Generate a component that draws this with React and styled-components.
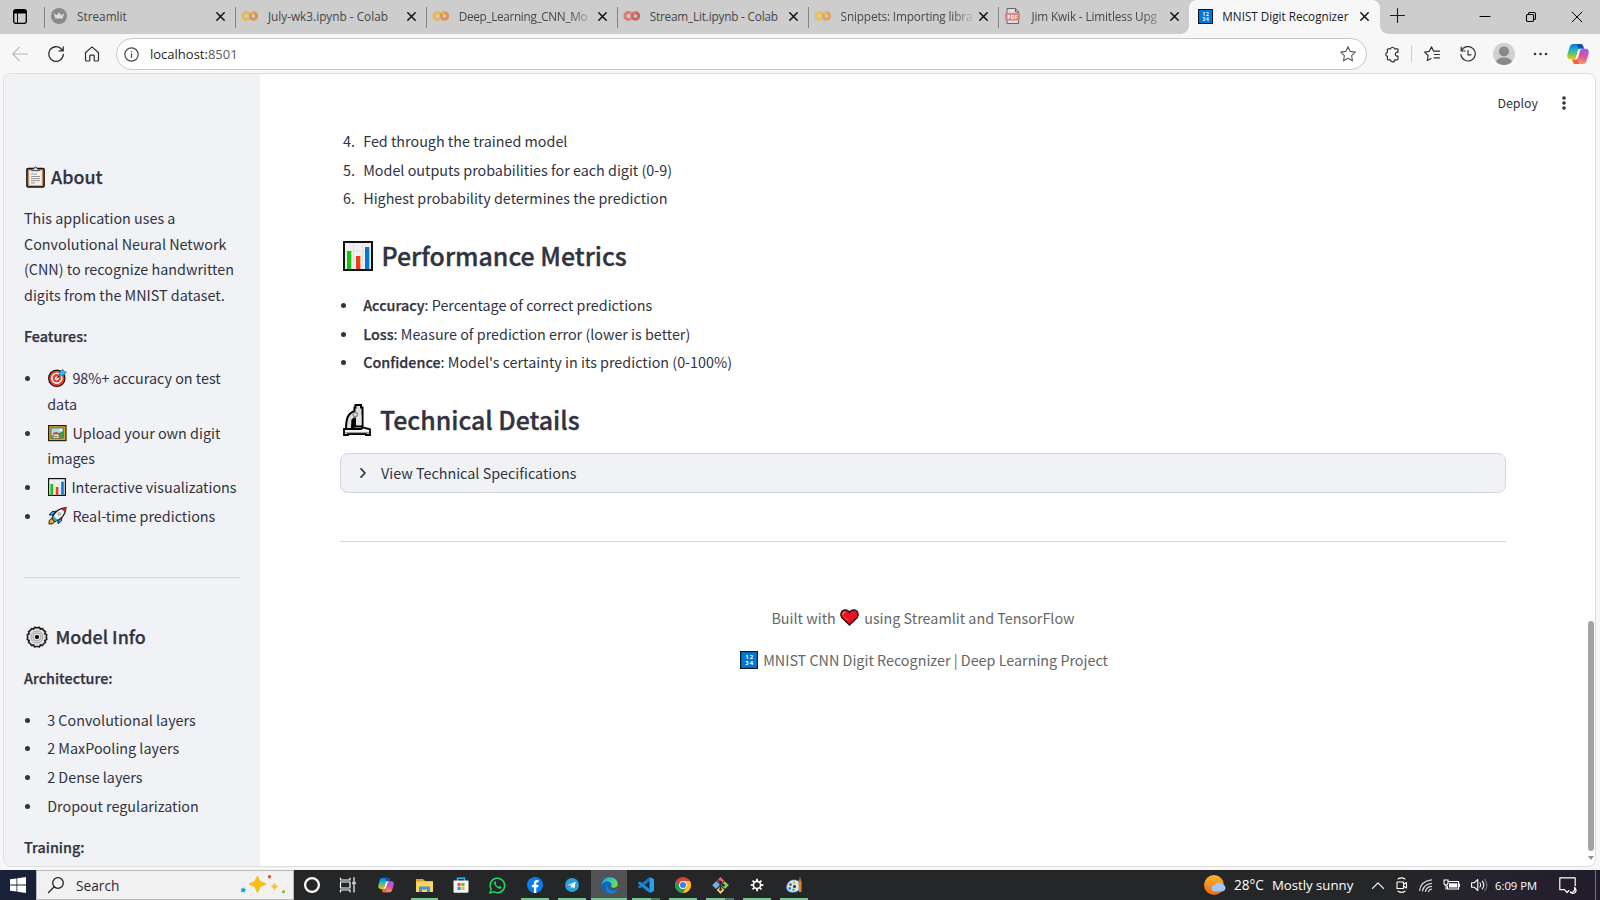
import React from "react";
import styled, { createGlobalStyle, css } from "styled-components";

const SEGOE = `"Open Sans", "Noto Sans", sans-serif`;
const SOURCE = `"Noto Sans CJK SC", "Noto Sans", sans-serif`;

const Global = createGlobalStyle`
  * { box-sizing: border-box; }
  body { margin: 0; background: #f7f7f7; overflow: hidden; }
  svg { display: block; flex: none; overflow: visible; }
`;

const Screen = styled.div`
  width: 1600px; height: 900px; display: flex; flex-direction: column;
  font-family: ${SEGOE}; background: #f7f7f7; overflow: hidden;
`;

/* ---------- browser chrome ---------- */
const TabBar = styled.div`
  height: 34px; flex: none; background: #cdcdcd; display: flex; align-items: stretch;
`;
const TabMenu = styled.div`
  width: 44px; flex: none; display: flex; align-items: center; padding: 0 0 2px 13px;
`;
const Tab = styled.div`
  width: 190.9px; flex: none; display: flex; align-items: center; padding: 0 10px 2px 0;
  color: #474747; font-size: 11.8px; line-height: 18px;
  &::before { content: ""; width: 1px; height: 21px; margin: 2px 6px 0 0; background: #858585; flex: none; }
`;
const ActiveTab = styled.div`
  width: 191px; flex: none; display: flex; align-items: center; position: relative;
  background: #f7f7f7; border-radius: 8px 8px 0 0; padding: 0 11px 2px 9px;
  color: #1b1b1b; font-size: 11.7px; line-height: 18px;
  &::before, &::after {
    content: ""; position: absolute; bottom: 0; width: 8px; height: 8px;
  }
  &::before { left: -8px; background: radial-gradient(circle at 0 0, transparent 7.5px, #f7f7f7 8px); }
  &::after { right: -8px; background: radial-gradient(circle at 100% 0, transparent 7.5px, #f7f7f7 8px); }
`;
const TabTitle = styled.span`
  flex: 1; min-width: 0; margin: 0 6px 0 10px; padding-bottom: 1px; white-space: nowrap;
  letter-spacing: ${(p) => p.$track || 0}px;
  ${(p) => p.$fade && css`mask-image: linear-gradient(90deg, #000 calc(100% - 22px), rgba(0, 0, 0, 0.15));`}
`;
const TabIcon = styled.span`width: ${(p) => p.$w || 16}px; flex: none; opacity: ${(p) => (p.$dim ? 0.6 : 1)};`;
const WindowButtons = styled.div`
  flex: 1; display: flex; align-items: center; justify-content: flex-end; gap: 36px; padding-right: 18px;
`;
const NewTab = styled.div`display: flex; align-items: center; padding: 0 0 3px 10px;`;

const Toolbar = styled.div`
  height: 39px; flex: none; display: flex; align-items: center; padding: 0 11px 0 12px; background: #f7f7f7;
`;
const NavButtons = styled.div`display: flex; align-items: center; gap: 20px; width: 104px; flex: none;`;
const AddressField = styled.div`
  width: 1251px; height: 32px; flex: none; border: 1px solid #c9c9c9; border-radius: 16px; background: #fff;
  display: flex; align-items: center; padding: 0 10px 0 7px; margin-top: 1px;
`;
const Url = styled.span`
  flex: 1; margin-left: 11px; font-size: 13px; line-height: 20px; color: #1f1f1f;
  span { color: #5a5a5a; }
`;
const ToolIcons = styled.div`
  display: grid; grid-template-columns: 27px 13px 36px 33px 39.5px 34.5px 22px; align-items: center; padding-left: 17px;
`;
const Divider = styled.span`width: 1px; height: 16px; background: #cfcfcf;`;

/* ---------- page ---------- */
const Viewport = styled.div`
  height: 794px; flex: none; margin: 0 4px 3px 3px; border: 1px solid #dedede; border-radius: 8px;
  display: flex; overflow: hidden; background: #fff; position: relative;
  font-family: ${SOURCE}; font-size: 14.35px; line-height: 25.6px; color: #31333f;
`;
const Sidebar = styled.aside`
  width: 256px; flex: none; background: #f0f2f6; padding: 90px 20px 0; white-space: nowrap; overflow: hidden;
`;
const Main = styled.main`
  flex: 1; padding: 54px 89px 0 80px; overflow: hidden; white-space: nowrap;
`;
const Heading = styled.h3`
  margin: 0 0 17px; display: flex; align-items: center; gap: ${(p) => p.$gap}px;
  padding-left: 2px; font-weight: 500; font-size: 17.9px; line-height: 24px; height: 24px;
  -webkit-text-stroke: 0.25px #31333f;
  svg { margin-top: 2px; }
`;
const Title = styled.h2`
  margin: ${(p) => p.$top}px 0 ${(p) => p.$bottom}px; display: flex; align-items: center; gap: ${(p) => p.$gap}px;
  padding-left: 3px; font-weight: 500; font-size: 24.9px; line-height: 34px; height: 34px;
  -webkit-text-stroke: 0.35px #31333f;
  svg { margin-top: 2px; }
`;
const Paragraph = styled.p`margin: 0 0 16px;`;
const Strong = styled.strong`font-weight: 500; -webkit-text-stroke: 0.25px #31333f;`;
const List = styled.ul`list-style: none; margin: ${(p) => p.$top || 0}px 0 0; padding: 0;`;
const Item = styled.li`
  display: grid; grid-template-columns: 23.2px 1fr; margin-bottom: 3.1px;
  &:last-child { margin-bottom: 0; }
`;
const Bullet = styled.span`
  width: 5px; height: 5px; border-radius: 50%; background: #31333f; margin: 11px 0 0 1.2px;
`;
const Number = styled.span`padding-left: 3px;`;
const Glyph = styled.span`
  display: inline-block; vertical-align: -3px; height: 18px; line-height: 0; margin: 0 ${(p) => p.$r ?? 2}px 0 ${(p) => p.$l ?? 1}px;
`;
const Rule = styled.hr`
  border: 0; height: 1px; background: #d2d4da; margin: ${(p) => p.$top}px 0 ${(p) => p.$bottom}px;
`;
const Expander = styled.div`
  height: 40px; border: 1px solid #d5d6db; border-radius: 8px; background: #f0f2f6;
  display: flex; align-items: center; padding: 0 0 1.5px 18px; gap: 14px;
`;
const Footer = styled.footer`text-align: center; color: #666;`;
const Credit = styled(Paragraph)`padding-left: ${(p) => p.$shift || 0}px;`;
const PageMenu = styled.div`
  position: absolute; top: 17px; right: 29px; display: flex; align-items: center; gap: 24px;
  font-size: 12.4px; line-height: 24px;
`;
const ScrollTrack = styled.div`
  position: absolute; top: 547px; right: 1px; width: 6px; height: 240px;
  display: flex; flex-direction: column; align-items: center; gap: 5px;
`;
const ScrollThumb = styled.div`width: 6px; height: 230px; border-radius: 3px; background: #a3a3a8;`;
const ScrollArrow = styled.span`border: 3px solid transparent; border-top: 4px solid #8f8f94; border-bottom: 0;`;

/* ---------- taskbar ---------- */
const Taskbar = styled.div`
  height: 30px; flex: none; display: flex; align-items: stretch; color: #fff;
  background: linear-gradient(90deg, #252628 0 1400px, #26222e 1500px, #211c2c);
`;
const StartButton = styled.div`
  width: 36px; flex: none; background: #182137; display: flex; align-items: center; justify-content: center;
`;
const SearchBox = styled.div`
  width: 258px; flex: none; background: #f1f1f1; border: 1px solid #b9b9b9; color: #2b2b2b;
  display: flex; align-items: center; padding: 0 7px 0 11px; font-size: 13.7px; line-height: 20px;
  span { flex: 1; margin-left: 12px; padding-top: 1px; }
`;
const Apps = styled.div`display: flex; flex: 1;`;
const TaskButton = styled.div`
  width: ${(p) => p.$w || 37}px; flex: none; display: flex; align-items: center; justify-content: center; position: relative;
  ${(p) => p.$active && css`&::before { content: ""; position: absolute; inset: 0 0.5px; background: #505256; }`}
  svg { position: relative; }
`;
const Underline = styled.span`
  position: absolute; bottom: 0; height: 2px; left: ${(p) => (p.$full ? 0.5 : 4.5)}px; right: ${(p) => (p.$full ? 0.5 : 4.5)}px;
  background: ${(p) => (p.$stack ? "linear-gradient(90deg, #76c794 19px, #4b805f 19px)" : "#76c794")};
`;
const Tray = styled.div`
  width: 396px; flex: none; display: flex; align-items: center;
`;
const Weather = styled.div`
  display: flex; align-items: center; width: 168px; font-size: 13.2px; line-height: 20px; white-space: nowrap;
`;
const Degrees = styled.span`margin: 0 8px 0 8px; font-size: 13.6px;`;
const TrayIcons = styled.div`display: flex; align-items: center; gap: 11px; width: 123px;`;
const Clock = styled.span`font-size: 11.25px; width: 63.5px; white-space: nowrap;`;
const ShowDesktop = styled.span`margin-left: auto; width: 5px; align-self: stretch; border-left: 1px solid #77757d;`;

/* ---------- drawings ---------- */
const Line = ({ w = 16, h, vb, c = "#333", s = 1, d, children }) => (
  <svg width={w} height={h || w} viewBox={vb || `0 0 ${w} ${h || w}`} fill="none" stroke={c} strokeWidth={s} strokeLinecap="round" strokeLinejoin="round">
    {d && <path d={d} />}{children}
  </svg>
);
const CloseX = ({ c = "#111", s = 1.5 }) => <Line w={9} c={c} s={s} d="M.8.8l7.4 7.4M8.2.8L.8 8.2" />;

const StreamlitIcon = () => (
  <svg width="16" height="16" viewBox="0 0 16 16"><circle cx="8" cy="8" r="8" fill="#5d5d66" />
    <path d="M2.700 5.300l3 1.900L8 4.200l2.300 3 3-1.900-1.700 5.300H4.400z" fill="#e8e8ea" /></svg>
);
const ColabIcon = ({ a, b }) => (
  <svg width="16" height="16" viewBox="0 0 16 16" fill="none" strokeWidth="3">
    <path d="M6.800 5.600A3.400 3.400 0 1 0 6.800 10.400" stroke={a} /><circle cx="11.400" cy="8" r="3.300" stroke={b} />
    <path d="M8.900 5.800a3.300 3.300 0 0 1 2.500-1.100" stroke={a} /></svg>
);
const PdfIcon = () => (
  <svg width="16" height="16" viewBox="0 0 16 16"><path d="M2 .5h8.500L13.500 4v11.500H2z" fill="#e9e9e9" stroke="#222" />
    <path d="M10.500.5V4h3" fill="none" stroke="#222" /><rect x="0" y="5" width="15" height="7.600" rx="1" fill="#f0514f" />
    <text x="7.500" y="10.800" textAnchor="middle" fontFamily="Open Sans" fontWeight="800" fontSize="5.400" fill="#fff">PDF</text></svg>
);
const DigitsIcon = ({ size = 18 }) => (
  <svg width={size} height={size} viewBox="0 0 18 18"><rect x=".6" y=".6" width="16.800" height="16.800" fill="#0078d7" stroke="#0c1626" strokeWidth="1.200" />
    <g fill="#fff" fontFamily="Open Sans" fontWeight="700" fontSize="5.800" textAnchor="middle">
      <text x="7" y="8.400">1</text><text x="11.300" y="8.400">2</text><text x="7" y="14.200">3</text><text x="11.300" y="14.200">4</text></g></svg>
);
const CopilotIcon = ({ size = 22, id }) => (
  <svg width={size} height={size} viewBox="0 0 22 22">
    <defs>
      <linearGradient id={id + "a"} x1="0" y1="0" x2="0" y2="1"><stop offset="0" stopColor="#0b73d9" /><stop offset=".35" stopColor="#13b0e0" /><stop offset=".65" stopColor="#6fc35a" /><stop offset="1" stopColor="#f3c814" /></linearGradient>
      <linearGradient id={id + "b"} x1=".6" y1="0" x2=".3" y2="1"><stop offset="0" stopColor="#9d5cf0" /><stop offset=".45" stopColor="#e0529b" /><stop offset="1" stopColor="#fba35a" /></linearGradient>
    </defs>
    <path d="M6.500 1h7.200c1.600 0 2.100.9 2.600 2.600l.6 2.200h-2.400c-1.400 0-2 .8-2.400 2l-2 6.200c-.5 1.600-1.200 2.400-2.800 2.400H3.500C.8 16.400-.2 14 .5 11L2.600 4.200C3.200 2 4.300 1 6.500 1z" fill={`url(#${id}a)`} />
    <path d="M13.700 1c1.600 0 2.100.9 2.600 2.600l.6 2.200h-2.400c-1.400 0-2 .8-2.300 1.800L10 1z" fill="#164fa8" />
    <path d="M15.500 21H8.600c-1.600 0-2.200-.9-2.700-2.600l-.5-2H7.300c1.600 0 2.300-.8 2.800-2.400l2-6.200c.4-1.200 1-2 2.400-2h4c2.800 0 3.800 2.200 3.100 5.100l-2.100 6.900C18.900 20 17.700 21 15.500 21z" fill={`url(#${id}b)`} />
    <path d="M5.400 16.400h1.900c1.400 0 2.200-.7 2.700-2l2 6.600H8.600c-1.600 0-2.200-.9-2.700-2.600z" fill="#f0603c" />
    <path d="M10.800 7.300c.5-1.100 1.200-1.500 2.400-1.500h2.300c-1.500 0-2 .9-2.400 2L11 14.500c-.5 1.300-1.200 1.900-2.400 1.900H6.500c1.500 0 2.100-.8 2.500-2z" fill="#fff" />
  </svg>
);
const AvatarIcon = () => (
  <svg width="22" height="22" viewBox="0 0 22 22"><defs><clipPath id="av"><circle cx="11" cy="11" r="11" /></clipPath></defs>
    <circle cx="11" cy="11" r="11" fill="#d2d0ce" /><circle cx="11" cy="8.500" r="5" fill="#8a8886" />
    <ellipse cx="11" cy="19.500" rx="8" ry="5" fill="#8a8886" clipPath="url(#av)" /></svg>
);
const ClipboardIcon = () => (
  <svg width="19" height="22" viewBox="0 0 19 22"><rect x=".9" y="2.400" width="17.200" height="18.600" rx="1.200" fill="#c98c5c" stroke="#111" strokeWidth="1.500" />
    <path d="M3.200 4.600h12.600v14.600H3.200z" fill="#f3f3f3" /><path d="M5.800 4.700V2.900h2A1.900 1.900 0 0 1 9.500 1a1.900 1.900 0 0 1 1.700 1.900h2v1.800z" fill="#d9d9d9" stroke="#222" strokeWidth=".8" />
    <path d="M5 8h6M5 10.500h9M5 12.600h9M5 14.700h9M5 16.900h4" stroke="#8a8a8a" strokeWidth=".9" /></svg>
);
const TargetIcon = () => (
  <svg width="19" height="18" viewBox="0 0 19 18"><circle cx="8.800" cy="9.300" r="8.200" fill="#e8402a" stroke="#111" strokeWidth="1.100" />
    <circle cx="8.800" cy="9.300" r="5" fill="none" stroke="#fff" strokeWidth="1.500" /><circle cx="8.800" cy="9.300" r="1.900" fill="#fff" />
    <path d="M8.800 9.500l5-5.500" stroke="#111" strokeWidth="1" /><path d="M11 7l.4-3.600L14.700.3l1 2 2.600.9-3.200 3.400z" fill="#38b6f0" stroke="#0a6fae" strokeWidth=".8" /></svg>
);
const PictureIcon = () => (
  <svg width="19" height="18" viewBox="0 0 19 18"><rect x=".6" y="1.600" width="17.400" height="15" fill="#d9a520" stroke="#222" strokeWidth="1.200" />
    <rect x="3" y="4" width="12.600" height="10.200" fill="#a8dcf5" stroke="#6c5411" strokeWidth=".7" /><path d="M3.400 14v-2.500L9 10l6.200-3v7z" fill="#3a9d4a" />
    <circle cx="12.700" cy="6" r="1.200" fill="#fff" /><path d="M5.500 14V9.500l1.500.6h2l1.500-.6V14z" fill="#eee" /><path d="M5 9l3-1 3 1v1.500H5z" fill="#c94432" /><path d="M5.500 12l2 .8h2" stroke="#333" strokeWidth=".8" fill="none" /></svg>
);
const ChartIcon = ({ size = 18 }) => (
  <svg width={size} height={size} viewBox="0 0 30 30"><rect x="1" y="1" width="28" height="28" fill="#f0f0f0" stroke="#111" strokeWidth="2" />
    <path d="M10.500 2v26M19.500 2v26M2 10h26M2 19h26" stroke="#dcdcdc" strokeWidth=".8" />
    <path d="M4 10h4.300v18H4z" fill="#16c60c" /><path d="M13 15h4.300v13H13z" fill="#f03a17" /><path d="M22 6h4.300v22H22z" fill="#0078d7" /></svg>
);
const RocketIcon = () => (
  <svg width="19" height="18" viewBox="0 0 19 18"><path d="M1 17c-.3-3 .5-5 3-5.500l2.800 2.700C6.300 16.500 4 17.300 1 17z" fill="#f7a028" stroke="#111" strokeWidth=".9" />
    <path d="M5 8H1.200L4 4.600l4.500-.4zM10 13v3.800l3.500-3 .4-4.300z" fill="#32a8e8" stroke="#111" strokeWidth=".9" />
    <path d="M4 11.200C6 5.500 11 1.200 18 .6c-.4 7-5 11.800-11 14z" fill="#f4f4f4" stroke="#111" strokeWidth="1.100" />
    <path d="M13.200 1.900C14.800 1.200 16.500.8 18 .6c-.1 1.700-.4 3.200-1 4.600z" fill="#d0202c" /><circle cx="11.300" cy="7" r="1.500" fill="#ccc" stroke="#777" strokeWidth=".5" /><path d="M4.300 11l2.600 3.300 3-1.300-4-4z" fill="#38a8e8" /></svg>
);
const GearIcon = () => (
  <svg width="22" height="22" viewBox="0 0 22 22">
    <path d="M8.500 1.200q2.500 1 5 0l.8 2 2-.8q1 2.300 3.300 3.300l-.9 2 2.100.9q-1 2.500 0 5l-2.100.8.9 2q-2.300 1-3.300 3.300l-2-.9-.8 2.100q-2.500-1-5 0l-.8-2.100-2 .9q-1-2.300-3.300-3.300l.9-2-2.100-.8q1-2.500 0-5l2.100-.9-.9-2q2.300-1 3.300-3.300l2 .8z" fill="#dedede" stroke="#161616" strokeWidth="1.500" strokeLinejoin="round" />
    <circle cx="11" cy="11" r="6" fill="#d4d4d4" stroke="#a0a0a0" strokeWidth=".8" /><circle cx="11" cy="11" r="3.900" fill="#e4e4e4" stroke="#909090" strokeWidth=".7" /><circle cx="11" cy="11" r="2.100" fill="#000" /></svg>
);
const MicroscopeIcon = () => (
  <svg width="28" height="32" viewBox="0 0 28 32" strokeLinejoin="miter">
    <path d="M3 25.500C3 15 4.500 9.500 11.500 7V3.500h1V1h5.500v2.500h1.500v19h-7.300V15C9.500 17 9 21 9 25.500z" fill="#dcdcdc" stroke="#000" strokeWidth="2" />
    <path d="M8.300 25V16l3.200-3.500v11l4 1.500z" fill="#000" /><path d="M13 11h5.500v10H13z" fill="#e6e6e6" /><circle cx="12.300" cy="10.500" r="2.200" fill="#ddd" stroke="#888" strokeWidth="1.200" />
    <path d="M1 25h17l2-1.500 7 1.800V31h-4v-1H5v1H1z" fill="#f2f2f2" stroke="#000" strokeWidth="1.800" /><path d="M2 28.800h24" stroke="#777" strokeWidth="1" /></svg>
);
const HeartIcon = () => (
  <svg width="19" height="17" viewBox="0 0 19 17"><path d="M9.500 16L1.700 8.500C-.6 5.500 1.600.8 5.200.8c2 0 3.500 1 4.300 2.600C10.300 1.800 11.800.8 13.800.8c3.600 0 5.800 4.700 3.500 7.700z" fill="#e81224" stroke="#151515" strokeWidth="1.300" />
    <path d="M3 5.500c.2-1.200.8-1.900 1.800-2.300" stroke="#ff7a6b" strokeWidth="1.300" fill="none" strokeLinecap="round" /><path d="M4 7.500l4 4" stroke="#f56a4c" strokeWidth=".8" /></svg>
);

/* taskbar drawings */
const WindowsLogo = () => (
  <svg width="16" height="16" viewBox="0 0 16 16" fill="#fff"><path d="M0 2.300l6.500-.9v6.200H0zM7.300 1.300L16 0v7.600H7.300zM0 8.400h6.500v6.200L0 13.700zM7.300 8.400H16V16l-8.700-1.300z" /></svg>
);
const Sparkles = () => (
  <svg width="46" height="20" viewBox="0 0 46 20">
    <path d="M17.500 1l2.600 5.400L26 9l-5.900 2.600-2.600 6-2.600-6L9 9l5.900-2.600z" fill="#f9bd14" stroke="#f9bd14" strokeWidth="1" strokeLinejoin="round" />
    <path d="M34.500 7.500l1.500 2.800 2.800 1.200L36 12.800l-1.500 2.900-1.500-2.900-2.800-1.300 2.800-1.200z" fill="#f8c33a" />
    <path d="M3.500 12l.9 1.800 2.100.7-1.700 1.300-.3 2.200-1.600-1.200-2.200.2.800-2-.7-1.600h2z" fill="#0aa5ea" /><circle cx="29.500" cy="1.800" r="1.700" fill="#e8542c" /><circle cx="43.500" cy="16.700" r="1.600" fill="#86bb44" /></svg>
);
const FolderIcon = () => (
  <svg width="17" height="15" viewBox="0 0 17 15"><path d="M0 1h7l2 2h8v9H0z" fill="#e3a01c" /><path d="M0 3.500h17v10.500H0z" fill="#fcd462" /><path d="M3 14V8.500h11V14h-3v-2.500H6V14z" fill="#3e97dd" /></svg>
);
const StoreIcon = () => (
  <svg width="16" height="16" viewBox="0 0 16 16"><path d="M4.500 4V1.200h7V4" fill="none" stroke="#32b4ec" strokeWidth="1.400" /><path d="M.5 3.500h15v11a1.300 1.300 0 0 1-1.300 1.300H1.800A1.300 1.300 0 0 1 .5 14.500z" fill="#f5f5f5" />
    <path d="M4.500 6H7.600v3.100H4.500z" fill="#f25022" /><path d="M8.400 6h3.100v3.100H8.400z" fill="#7fba00" /><path d="M4.500 9.900h3.100V13H4.500z" fill="#00a4ef" /><path d="M8.400 9.900h3.100V13H8.400z" fill="#ffb900" /></svg>
);
const WhatsAppIcon = () => (
  <svg width="17" height="17" viewBox="0 0 17 17"><path d="M1 16l1.100-3.900A7.300 7.300 0 1 1 5 14.900z" fill="none" stroke="#25d366" strokeWidth="1.500" />
    <path d="M5.300 4.600c.5-.6 1.100-.4 1.300 0l.6 1.500c.1.300-.5.900-.5 1.100.5 1.200 1.700 2.200 2.900 2.600.3 0 .8-.9 1.100-.8l1.600.8c.3.200.1 1.200-.5 1.600-2.700 1.500-8-3.600-6.500-6.800z" fill="#25d366" /></svg>
);
const FacebookIcon = () => (
  <svg width="16" height="16" viewBox="0 0 16 16"><circle cx="8" cy="8" r="8" fill="#0b7bf0" /><path d="M6.900 16v-5.700H4.900V8h2V6.300c0-2 1.200-3.200 3-3.200l1.700.1v2h-1c-1 0-1.300.6-1.300 1.200V8h2.200l-.4 2.300H9.300V16z" fill="#fff" /></svg>
);
const TelegramIcon = () => (
  <svg width="14" height="14" viewBox="0 0 14 14"><circle cx="7" cy="7" r="7" fill="#2b9fd9" /><path d="M2.800 6.900l7.900-3.200-1.300 6.900-2.300-1.700-1.200 1.200-.3-2.200 3.300-3-4.200 2.600z" fill="#fff" /></svg>
);
const EdgeIcon = () => (
  <svg width="17" height="17" viewBox="0 0 17 17"><defs><linearGradient id="eg" x1="0" y1="0" x2="1" y2=".3"><stop offset="0" stopColor="#1b9de2" /><stop offset=".5" stopColor="#2bc3cf" /><stop offset="1" stopColor="#6bdc57" /></linearGradient></defs>
    <circle cx="8.500" cy="8.500" r="8.200" fill="#1464b4" /><path d="M.4 8.200C.8 3.600 4.300.3 8.600.3c4.900 0 8.200 3.400 8.200 6.600 0 2.600-1.800 4-4 4-1.700 0-3-.6-3-1.300 0-.5.7-.8.7-1.800C10.500 6 8.700 4.500 6.300 4.500 3.400 4.500 1 6.300.4 8.200z" fill="url(#eg)" />
    <path d="M6.700 7.500c-1.700 4.200 2.700 7.300 6.600 5.700l3-1c.3 0 .4.200.2.600-1.500 2.500-4 3.900-7 3.900C5 15.500 3.500 10 6.700 7.500z" fill="#1a80d0" /><path d="M9.800 9.600c0 .7 1.300 1.300 3 1.300 1.700 0 3.100-.9 3.700-2.100l.4 3.200-3.900 1.200c-2.600.6-4.800-1-3.200-3.600z" fill="#505256" /></svg>
);
const VsCodeIcon = () => (
  <svg width="16" height="16" viewBox="0 0 16 16"><path d="M11.500 4.300V0L16 2v12l-4.500 2v-4.300L7 8z" fill="#24a1f2" fillRule="evenodd" /><path d="M11.500 0v4.300L1.900 11.500 0 10.300v-.8z" fill="#0f7cc9" /><path d="M11.500 16v-4.300L1.900 4.500 0 5.700v.8z" fill="#1a8bd8" /><path d="M11.500 4.300v7.400L6.800 8z" fill="#252628" /></svg>
);
const ChromeIcon = () => (
  <svg width="16" height="16" viewBox="0 0 16 16"><circle cx="8" cy="8" r="8" fill="#e33b2e" /><path d="M1.070 4A8 8 0 0 0 8 16l3.460-6H4.540z" fill="#21a14c" /><path d="M8 16A8 8 0 0 0 14.930 4H8l3.460 6z" fill="#fbc116" /><circle cx="8" cy="8" r="3.900" fill="#fff" /><circle cx="8" cy="8" r="3" fill="#3b7ded" /></svg>
);
const GitIcon = () => (
  <svg width="17" height="17" viewBox="0 0 17 17"><path d="M8.500 0l3.800 3.800-3.800 3.800-3.800-3.800z" fill="#f0606a" /><path d="M4.200 4.300L8 8.100l-4 4L.2 8.300z" fill="#70b0f4" /><path d="M12.800 4.300l4 4-4 3.800L9 8.300z" fill="#89cf5a" /><path d="M8.500 9.200l3.800 3.800-3.800 3.900L4.700 13z" fill="#f5d75c" />
    <path d="M5 2l6.500 6.500M8.500 5v8" stroke="#333" strokeWidth="1.300" /><g fill="#222"><circle cx="8.500" cy="5" r="1.300" /><circle cx="11.600" cy="8.300" r="1.300" /><circle cx="8.500" cy="12.500" r="1.300" /></g></svg>
);
const SettingsIcon = () => (
  <svg width="14" height="14" viewBox="-7 -7 14 14"><circle r="3.600" fill="none" stroke="#fff" strokeWidth="1.600" />
    {[0, 45, 90, 135, 180, 225, 270, 315].map((a) => <path key={a} d="M-.9-6.300h1.800v2.200h-1.800z" fill="#fff" transform={`rotate(${a})`} />)}</svg>
);
const PaintIcon = () => (
  <svg width="17" height="16" viewBox="0 0 17 16"><path d="M8 3c4.500 0 7 2.500 6.500 6.500S10.500 15.500 6 15.200C2 15 0 12.500.8 9S4 3 8 3z" fill="#cfeaf8" stroke="#4f9fd0" strokeWidth=".7" /><circle cx="4.500" cy="7.500" r="1.500" fill="#e33" /><circle cx="8" cy="5.800" r="1.300" fill="#f3b71b" /><circle cx="3.700" cy="11.500" r="1.400" fill="#2a80d8" /><circle cx="7.500" cy="12.800" r="1.200" fill="#4bb33b" /><circle cx="8.500" cy="9.500" r="1.500" fill="#333" />
    <path d="M12.500 5h3.200l-.3 10h-2.500z" fill="#e5801e" /><path d="M12.300 5.300L14-.5l1.800 5.800z" fill="#b56b2e" /></svg>
);
const SunIcon = () => (
  <svg width="22" height="20" viewBox="0 0 22 20"><defs><linearGradient id="sun" x1="0" y1="0" x2="0" y2="1"><stop offset="0" stopColor="#f7b52b" /><stop offset="1" stopColor="#ee6a16" /></linearGradient></defs>
    <circle cx="10" cy="10" r="10" fill="url(#sun)" /><path d="M11 16.500a3.300 3.300 0 0 1-.2-6.600 4.500 4.500 0 0 1 8.200-.2 3.500 3.500 0 0 1-.3 6.800z" fill="#a4c5f8" /></svg>
);

const inactiveTabs = [
  { title: "Streamlit", icon: <StreamlitIcon /> },
  { title: "July-wk3.ipynb - Colab", icon: <ColabIcon a="#f9ab00" b="#e8710a" /> },
  { title: "Deep_Learning_CNN_Mo", icon: <ColabIcon a="#f9ab00" b="#e8710a" />, fade: true, track: -0.35 },
  { title: "Stream_Lit.ipynb - Colab", icon: <ColabIcon a="#e8453c" b="#c5221f" />, track: -0.2 },
  { title: "Snippets: Importing libra", icon: <ColabIcon a="#fbbc04" b="#f08a12" />, fade: true, track: -0.15 },
  { title: "Jim Kwik - Limitless Upg", icon: <PdfIcon />, fade: true, track: -0.15 },
];

const apps = [
  { icon: <Line w={16} c="#fff" s={2.200}><circle cx="8" cy="8" r="6.900" /></Line>, w: 36 },
  { icon: <Line w={16} c="#fff" s={1.200} d="M.5 1v2h9.500V1M.5 5h9.500v6H.5zM.5 15v-2h9.500v2M14 .5v3M14 8.500V15M13 5h2v2h-2z" />, w: 36 },
  { icon: <CopilotIcon size={16} id="tb" />, w: 40 },
  { icon: <FolderIcon />, run: true, w: 36.500 },
  { icon: <StoreIcon />, w: 36 },
  { icon: <WhatsAppIcon />, w: 38 },
  { icon: <FacebookIcon />, run: true },
  { icon: <TelegramIcon />, run: true },
  { icon: <EdgeIcon />, run: true, active: true },
  { icon: <VsCodeIcon />, run: true, stack: true },
  { icon: <ChromeIcon />, run: true },
  { icon: <GitIcon />, run: true, stack: true },
  { icon: <SettingsIcon />, run: true },
  { icon: <PaintIcon />, run: true },
];

const BulletItem = ({ children }) => <Item><Bullet /><span>{children}</span></Item>;

export default function App() {
  return (
    <Screen>
      <Global />
      <TabBar>
        <TabMenu>
          <svg width="14" height="15" viewBox="0 0 14 15"><rect x=".7" y=".7" width="12.600" height="13.600" rx="2" fill="none" stroke="#000" strokeWidth="1.300" /><path d="M1 1h12v3.500H1z" /><path d="M4.500 4v10" stroke="#000" /></svg>
        </TabMenu>
        {inactiveTabs.map((t) => (
          <Tab key={t.title}>
            <TabIcon $dim>{t.icon}</TabIcon><TabTitle $fade={t.fade} $track={t.track}>{t.title}</TabTitle><CloseX />
          </Tab>
        ))}
        <ActiveTab>
          <TabIcon $w={14}><DigitsIcon size={15} /></TabIcon><TabTitle>MNIST Digit Recognizer</TabTitle><CloseX />
        </ActiveTab>
        <NewTab><Line w={15} c="#1a1a1a" s={1.100} d="M7.500.5v14M.5 7.500h14" /></NewTab>
        <WindowButtons>
          <Line w={10} c="#000" d="M0 4.500h10" />
          <Line w={10} c="#000" s={1.100} d="M2.500 2.500V1.800C2.500 1 3 .5 3.800.5h4C9 .5 9.500 1 9.500 2v4.200c0 .8-.5 1.300-1.300 1.300H7.500M1.700 2.500h4.600c.7 0 1.200.5 1.200 1.200v4.600c0 .7-.5 1.200-1.200 1.200H1.700C1 9.500.5 9 .5 8.300V3.700c0-.7.5-1.200 1.200-1.200z" />
          <Line w={10} c="#000" s={1} d="M0 0l10 10M10 0L0 10" />
        </WindowButtons>
      </TabBar>
      <Toolbar>
        <NavButtons>
          <Line w={16} c="#b9b9b9" s={1.100} d="M15.500 8H.8M7.500 1.200L.8 8l6.700 6.800" />
          <Line w={16} c="#2e2e2e" s={1.300} d="M15.300 8.300A7.300 7.300 0 1 1 13.300 3l1.500 1.700M15.200.8v4.100h-4.100" />
          <Line w={16} c="#2e2e2e" s={1.200} d="M1.500 6.700L8 .9l6.500 5.800V14c0 .6-.4 1-1 1H11c-.5 0-.8-.3-.8-.8V10c0-.5-.3-.8-.8-.8H6.600c-.5 0-.8.3-.8.8v4.200c0 .5-.3.8-.8.8H2.500c-.6 0-1-.4-1-1z" />
        </NavButtons>
        <AddressField>
          <Line w={15} c="#4a4a4a" s={1.200}><circle cx="7.500" cy="7.500" r="6.700" /><path d="M7.500 6.800v3.700M7.500 4.500v.2" /></Line>
          <Url>localhost:<span>8501</span></Url>
          <Line w={16} c="#5b5b5b" s={1.100} d="M8 .7l2.200 4.700 5.100.7-3.700 3.600.9 5.100L8 12.300l-4.500 2.500.9-5.100L.7 6.100l5.100-.7z" />
        </AddressField>
        <ToolIcons>
          <Line w={15} h={16} c="#333" s={1.200} d="M4 2.800h2.600a2 2 0 0 1 3.900 0h2.700c.5 0 .8.3.8.8v2.700a2 2 0 1 0 0 3.800v3c0 .5-.3.8-.8.8h-2.600a2 2 0 0 1-4 0H4.200c-.5 0-.8-.3-.8-.8v-2.700a2.100 2.100 0 0 1 0-4.100V3.500z" />
          <Divider />
          <Line w={16} c="#333" s={1.200} d="M9.700 5.200L7.500.8 5.300 5.300l-4.700.7 3.500 3.500-.8 5 3.700-2M9.700 5.200h5.800M10.500 8.500h5M10 11.800h5.500" />
          <Line w={16} c="#333" s={1.200} d="M1.200 1v4h4M1.500 4.800A7.200 7.200 0 1 1 .9 8.500M8 4.500v4.300h3" />
          <AvatarIcon />
          <svg width="15" height="4" viewBox="0 0 15 4" fill="#333"><circle cx="2" cy="2" r="1.300" /><circle cx="7.500" cy="2" r="1.300" /><circle cx="13" cy="2" r="1.300" /></svg>
          <CopilotIcon id="tool" />
        </ToolIcons>
      </Toolbar>

      <Viewport>
        <Sidebar>
          <Heading $gap={6}><ClipboardIcon />About</Heading>
          <Paragraph>This application uses a<br />Convolutional Neural Network<br />(CNN) to recognize handwritten<br />digits from the MNIST dataset.</Paragraph>
          <Paragraph><Strong>Features:</Strong></Paragraph>
          <List $top={16.300}>
            <BulletItem><Glyph><TargetIcon /></Glyph> 98%+ accuracy on test<br />data</BulletItem>
            <BulletItem><Glyph><PictureIcon /></Glyph> Upload your own digit<br />images</BulletItem>
            <BulletItem><Glyph><ChartIcon /></Glyph> Interactive visualizations</BulletItem>
            <BulletItem><Glyph><RocketIcon /></Glyph> Real-time predictions</BulletItem>
          </List>
          <Rule $top={48.700} $bottom={46.300} />
          <Heading $gap={7.500}><GearIcon />Model Info</Heading>
          <Paragraph><Strong>Architecture:</Strong></Paragraph>
          <List $top={16}>
            <BulletItem>3 Convolutional layers</BulletItem>
            <BulletItem>2 MaxPooling layers</BulletItem>
            <BulletItem>2 Dense layers</BulletItem>
            <BulletItem>Dropout regularization</BulletItem>
          </List>
          <List as="div" $top={16}><Strong>Training:</Strong></List>
        </Sidebar>
        <Main>
          <List as="ol">
            <Item><Number>4.</Number><span>Fed through the trained model</span></Item>
            <Item><Number>5.</Number><span>Model outputs probabilities for each digit (0-9)</span></Item>
            <Item><Number>6.</Number><span>Highest probability determines the prediction</span></Item>
          </List>
          <Title $top={27.500} $bottom={19.500} $gap={8.500}><ChartIcon size={30} />Performance Metrics</Title>
          <List>
            <BulletItem><Strong>Accuracy</Strong>: Percentage of correct predictions</BulletItem>
            <BulletItem><Strong>Loss</Strong>: Measure of prediction error (lower is better)</BulletItem>
            <BulletItem><Strong>Confidence</Strong>: Model's certainty in its prediction (0-100%)</BulletItem>
          </List>
          <Title $top={27.500} $bottom={17} $gap={9}><MicroscopeIcon />Technical Details</Title>
          <Expander><Line w={8} h={10} c="#31333f" s={1.700} d="M2 .8l4 4.200-4 4.200" />View Technical Specifications</Expander>
          <Rule $top={48} $bottom={63} />
          <Footer>
            <Credit>Built with <Glyph $l={1} $r={2}><HeartIcon /></Glyph> using Streamlit and TensorFlow</Credit>
            <Credit $shift={2}><Glyph $l={0} $r={2}><DigitsIcon /></Glyph> MNIST CNN Digit Recognizer | Deep Learning Project</Credit>
          </Footer>
        </Main>
        <PageMenu>Deploy<svg width="4" height="14" viewBox="0 0 4 14" fill="#31333f"><circle cx="2" cy="2" r="1.800" /><circle cx="2" cy="7" r="1.800" /><circle cx="2" cy="12" r="1.800" /></svg></PageMenu>
        <ScrollTrack><ScrollThumb /><ScrollArrow /></ScrollTrack>
      </Viewport>

      <Taskbar>
        <StartButton><WindowsLogo /></StartButton>
        <SearchBox>
          <Line w={16} c="#222" s={1.300} d="M6.300 9.700L.5 15.500"><circle cx="10" cy="6" r="5.300" /></Line>
          <span>Search</span>
          <Sparkles />
        </SearchBox>
        <Apps>
          {apps.map((a, i) => (
            <TaskButton key={i} $w={a.w} $active={a.active}>{a.icon}{a.run && <Underline $full={a.active} $stack={a.stack} />}</TaskButton>
          ))}
        </Apps>
        <Tray>
          <Weather><SunIcon /><Degrees>28°C</Degrees>Mostly sunny</Weather>
          <TrayIcons>
            <Line w={12} h={7} c="#fff" s={1.200} d="M.5 6.300L6 .8l5.500 5.500" />
            <Line w={13} h={16} c="#fff" s={1.100} d="M2 5h6.500v6.500H2zM8.500 7.500l3-2v5.500l-3-2M3 2Q6.500-.3 10 2M3 14.200Q6.500 16.500 10 14.200" />
            <Line w={13} h={13} c="#ddd" s={1.200} d="M.6 11.500C1.500 5.500 6 1.500 12.500.8M3.500 12C4.300 7.500 7.500 5 12.500 4.300M6.500 12.300c.6-2.600 2.500-4.500 6-4.900M9.500 12.500c.3-1.300 1.200-2.200 3-2.400" />
            <svg width="17" height="12" viewBox="0 0 17 12"><path d="M5.500 2.500h10v7.500h-11V7M1 1v3a2 2 0 0 0 4 0V1zM3 6v4.500M15.500 5h1v2.500h-1" fill="none" stroke="#fff" strokeWidth="1.100" /><path d="M6 4.300h8.300v4.200H6z" fill="#fff" /></svg>
            <Line w={17} h={14} c="#fff" s={1.100} d="M.6 4.800h2.600L6.800 1.500v11L3.200 9.200H.6zM9 5q1.500 2 0 4M11.300 3.200q3 3.800 0 7.600"><path d="M13.700 1.300q4.500 5.700 0 11.400" stroke="#777" /></Line>
          </TrayIcons>
          <Clock>6:09 PM</Clock>
          <Line w={17} h={17} c="#fff" s={1.200} d="M10 13.500L8 15.500l-2.500-2.800H.8V.8h15.400v8M15.500 10.500a3.200 3.200 0 1 1-4.200 4.700 3.500 3.500 0 0 0 4.200-4.700z" />
          <ShowDesktop />
        </Tray>
      </Taskbar>
    </Screen>
  );
}
